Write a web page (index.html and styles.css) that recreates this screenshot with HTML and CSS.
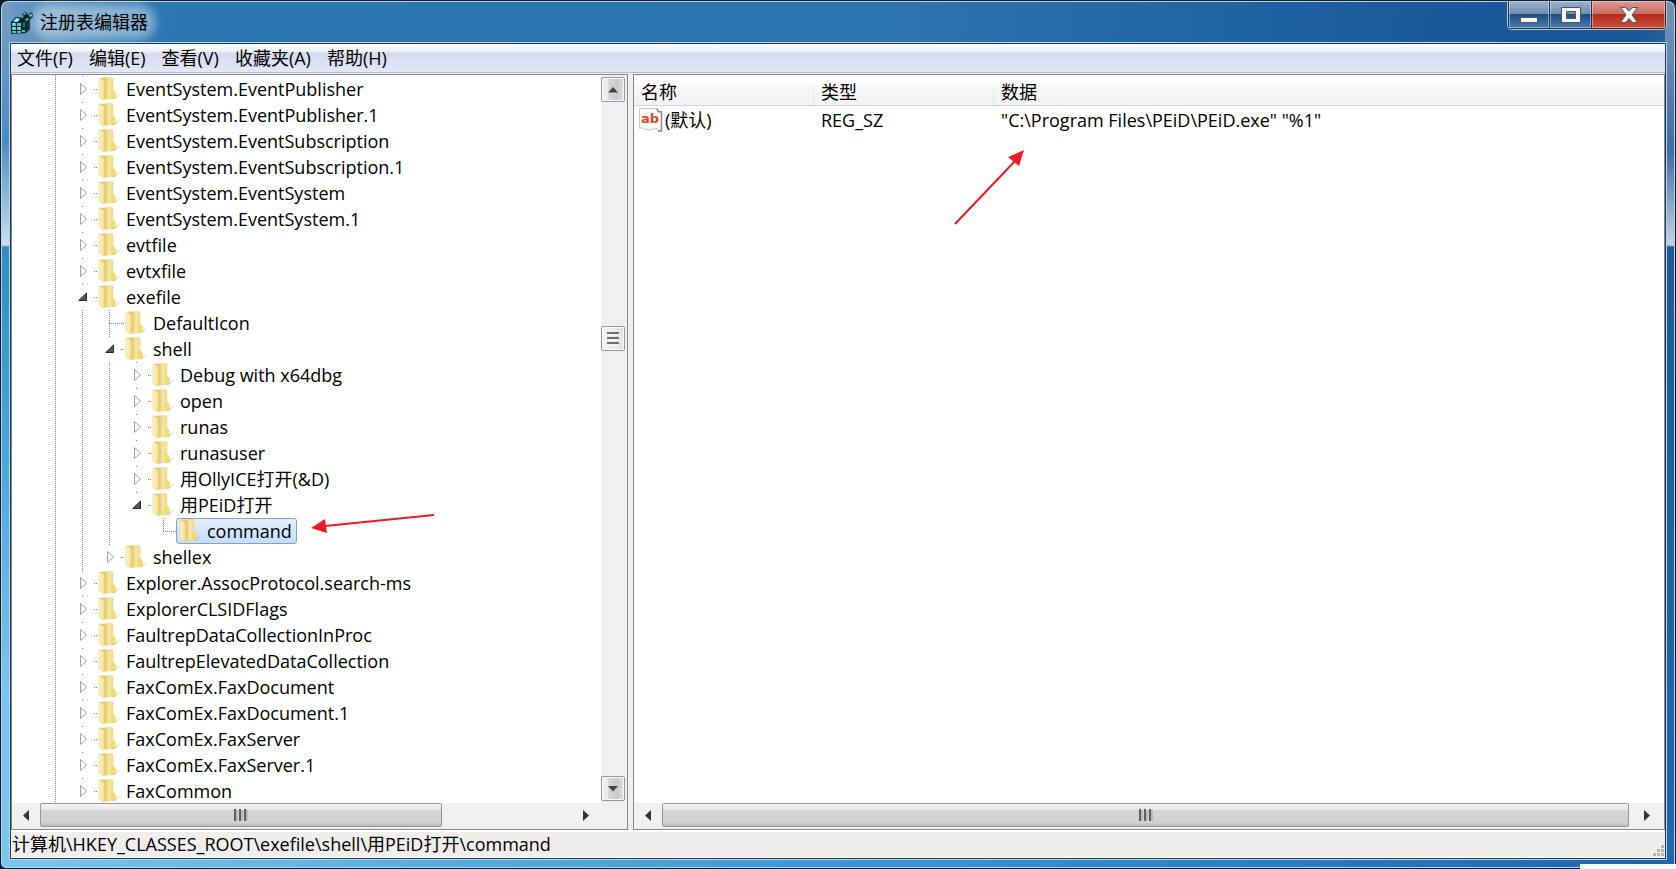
FILE: index.html
```
<!DOCTYPE html>
<html lang="zh-CN">
<head>
    <meta charset="UTF-8">
    <meta name="viewport" content="width=device-width, initial-scale=1.0">
    <title>注册表编辑器</title>
    <link rel="stylesheet" href="styles.css">
</head>
<body>
    <svg class="symbols" aria-hidden="true">
        <defs>
            <linearGradient id="cover" x1="0" y1="0" x2="1" y2="0">
                <stop offset="0" stop-color="#fdf5c4"/>
                <stop offset="1" stop-color="#f3e08e"/>
            </linearGradient>
            <linearGradient id="back" x1="0" y1="0" x2="1" y2="0">
                <stop offset="0" stop-color="#d9bd62"/>
                <stop offset="0.3" stop-color="#dfc46a"/>
                <stop offset="0.6" stop-color="#f5e7a4"/>
                <stop offset="1" stop-color="#f0d878"/>
            </linearGradient>
            <linearGradient id="shadow" x1="0" y1="0" x2="1" y2="0">
                <stop offset="0" stop-color="#888" stop-opacity="0.6"/>
                <stop offset="1" stop-color="#aaa" stop-opacity="0.1"/>
            </linearGradient>
            <symbol id="folder" viewBox="0 0 22 24">
                <path d="M14 22L22 15.500V18L17 22Z" fill="url(#shadow)"/>
                <path d="M2 1L13.500 0.500Q15 0.500 15 2V14L17 15V20Q17 21.500 15 21.500L6 22.500Z" fill="url(#back)" stroke="#ecd78c" stroke-width="0.600"/>
                <path d="M13.500 15.500Q13.500 14 15 14T17 15.500V20L14 21.500Z" fill="#f8df66" stroke="#e3c85e" stroke-width="0.500"/>
                <path d="M1 1.500Q1 1 2 1.200L5.500 2.800Q6.300 3.200 6.300 4.500V22.500Q6.300 23.300 5.500 23L1.500 20.500Q1 20 1 19Z" fill="url(#cover)" stroke="#e6d28a" stroke-width="0.600"/>
            </symbol>
            <symbol id="closed" viewBox="0 0 12 14">
                <path d="M2.500 1.500L8.500 7L2.500 12.500Z" fill="#fff" stroke="#a0a0a0"/>
            </symbol>
            <symbol id="opened" viewBox="0 0 12 14">
                <path d="M8.500 3V10.500H0.800Z" fill="#595959" stroke="#262626"/>
            </symbol>
        </defs>
    </svg>

    <div class="window">
        <header class="titlebar">
            <svg class="app-icon" viewBox="0 0 24 24" aria-hidden="true">
                <path d="M1 11L6 6L13 7L14 5L12 3L15 1L17 2L18 4L21 1L23 3L23 6L20 9L20 18L16 22L1 23Z" fill="#07262b"/>
                <path d="M2 12h4v3H2zM7 12h4v3H7zM2 16h4v3H2zM7 16h4v3H7zM2 20h4v2H2zM7 20h4v2H7zM12 19h3v2h-3z" fill="#3fc9c4"/>
                <path d="M3 10.500L6.500 7L10 8L7.500 11Z" fill="#a6f4ee"/>
                <path d="M13 2.500L15 1.500L16 3L15 4ZM19 4L21 2.500L22.500 4.500L20.500 6ZM15 9L17 7L19 8L16 10Z" fill="#48c9c8"/>
                <path d="M13 12L15 11V16H13Z" fill="#14777c"/>
                <path d="M3 12.500h2v1H3zM3 16.500h2v1H3zM8 16.500h2v1H8z" fill="#c8fffa"/>
            </svg>
            <h1 class="title">注册表编辑器</h1>
            <div class="caption-buttons">
                <button class="caption" type="button" aria-label="最小化">
                    <svg width="20" height="18" viewBox="0 0 20 18"><path d="M1.500 11.500h17v5h-17z" fill="#f4f4f4" stroke="#4f5567"/></svg>
                </button>
                <button class="caption" type="button" aria-label="最大化">
                    <svg width="20" height="18" viewBox="0 0 20 18"><path d="M0.500 1.500h19v15h-19zM5.500 5.500v7h9v-7z" fill="#f4f4f4" stroke="#4f5567" fill-rule="evenodd"/></svg>
                </button>
                <button class="caption close" type="button" aria-label="关闭">
                    <svg width="20" height="18" viewBox="0 0 20 18"><path d="M1.500 1.500H6.500L10 5L13.500 1.500H18.500L13 9L18.500 16.500H13.500L10 12.500L6.500 16.500H1.500L7 9Z" fill="#f4f4f4" stroke="#4f5567"/></svg>
                </button>
            </div>
        </header>

        <div class="client">
            <nav class="menubar">
                <button type="button">文件(F)</button>
                <button type="button">编辑(E)</button>
                <button type="button">查看(V)</button>
                <button type="button">收藏夹(A)</button>
                <button type="button">帮助(H)</button>
            </nav>

            <main class="panes">
                <section class="pane tree-pane">
                    <div class="tree-area">
                        <div class="tree">
                            <ul>
                                <li><div class="row"><button class="expander" type="button" aria-label="展开"><svg><use href="#closed"/></svg></button><a class="key" href="#"><svg><use href="#folder"/></svg>EventSystem.EventPublisher</a></div></li>
                                <li><div class="row"><button class="expander" type="button" aria-label="展开"><svg><use href="#closed"/></svg></button><a class="key" href="#"><svg><use href="#folder"/></svg>EventSystem.EventPublisher.1</a></div></li>
                                <li><div class="row"><button class="expander" type="button" aria-label="展开"><svg><use href="#closed"/></svg></button><a class="key" href="#"><svg><use href="#folder"/></svg>EventSystem.EventSubscription</a></div></li>
                                <li><div class="row"><button class="expander" type="button" aria-label="展开"><svg><use href="#closed"/></svg></button><a class="key" href="#"><svg><use href="#folder"/></svg>EventSystem.EventSubscription.1</a></div></li>
                                <li><div class="row"><button class="expander" type="button" aria-label="展开"><svg><use href="#closed"/></svg></button><a class="key" href="#"><svg><use href="#folder"/></svg>EventSystem.EventSystem</a></div></li>
                                <li><div class="row"><button class="expander" type="button" aria-label="展开"><svg><use href="#closed"/></svg></button><a class="key" href="#"><svg><use href="#folder"/></svg>EventSystem.EventSystem.1</a></div></li>
                                <li><div class="row"><button class="expander" type="button" aria-label="展开"><svg><use href="#closed"/></svg></button><a class="key" href="#"><svg><use href="#folder"/></svg>evtfile</a></div></li>
                                <li><div class="row"><button class="expander" type="button" aria-label="展开"><svg><use href="#closed"/></svg></button><a class="key" href="#"><svg><use href="#folder"/></svg>evtxfile</a></div></li>
                                <li>
                                    <div class="row"><button class="expander" type="button" aria-label="折叠"><svg><use href="#opened"/></svg></button><a class="key" href="#"><svg><use href="#folder"/></svg>exefile</a></div>
                                    <ul>
                                        <li><div class="row leaf"><a class="key" href="#"><svg><use href="#folder"/></svg>DefaultIcon</a></div></li>
                                        <li>
                                            <div class="row"><button class="expander" type="button" aria-label="折叠"><svg><use href="#opened"/></svg></button><a class="key" href="#"><svg><use href="#folder"/></svg>shell</a></div>
                                            <ul>
                                                <li><div class="row"><button class="expander" type="button" aria-label="展开"><svg><use href="#closed"/></svg></button><a class="key" href="#"><svg><use href="#folder"/></svg>Debug with x64dbg</a></div></li>
                                                <li><div class="row"><button class="expander" type="button" aria-label="展开"><svg><use href="#closed"/></svg></button><a class="key" href="#"><svg><use href="#folder"/></svg>open</a></div></li>
                                                <li><div class="row"><button class="expander" type="button" aria-label="展开"><svg><use href="#closed"/></svg></button><a class="key" href="#"><svg><use href="#folder"/></svg>runas</a></div></li>
                                                <li><div class="row"><button class="expander" type="button" aria-label="展开"><svg><use href="#closed"/></svg></button><a class="key" href="#"><svg><use href="#folder"/></svg>runasuser</a></div></li>
                                                <li><div class="row"><button class="expander" type="button" aria-label="展开"><svg><use href="#closed"/></svg></button><a class="key" href="#"><svg><use href="#folder"/></svg>用OllyICE打开(&amp;D)</a></div></li>
                                                <li class="last">
                                                    <div class="row"><button class="expander" type="button" aria-label="折叠"><svg><use href="#opened"/></svg></button><a class="key" href="#"><svg><use href="#folder"/></svg>用PEiD打开</a></div>
                                                    <ul>
                                                        <li class="last"><div class="row leaf"><a class="key selected" href="#"><svg><use href="#folder"/></svg>command</a></div></li>
                                                    </ul>
                                                </li>
                                            </ul>
                                        </li>
                                        <li class="last"><div class="row"><button class="expander" type="button" aria-label="展开"><svg><use href="#closed"/></svg></button><a class="key" href="#"><svg><use href="#folder"/></svg>shellex</a></div></li>
                                    </ul>
                                </li>
                                <li><div class="row"><button class="expander" type="button" aria-label="展开"><svg><use href="#closed"/></svg></button><a class="key" href="#"><svg><use href="#folder"/></svg>Explorer.AssocProtocol.search-ms</a></div></li>
                                <li><div class="row"><button class="expander" type="button" aria-label="展开"><svg><use href="#closed"/></svg></button><a class="key" href="#"><svg><use href="#folder"/></svg>ExplorerCLSIDFlags</a></div></li>
                                <li><div class="row"><button class="expander" type="button" aria-label="展开"><svg><use href="#closed"/></svg></button><a class="key" href="#"><svg><use href="#folder"/></svg>FaultrepDataCollectionInProc</a></div></li>
                                <li><div class="row"><button class="expander" type="button" aria-label="展开"><svg><use href="#closed"/></svg></button><a class="key" href="#"><svg><use href="#folder"/></svg>FaultrepElevatedDataCollection</a></div></li>
                                <li><div class="row"><button class="expander" type="button" aria-label="展开"><svg><use href="#closed"/></svg></button><a class="key" href="#"><svg><use href="#folder"/></svg>FaxComEx.FaxDocument</a></div></li>
                                <li><div class="row"><button class="expander" type="button" aria-label="展开"><svg><use href="#closed"/></svg></button><a class="key" href="#"><svg><use href="#folder"/></svg>FaxComEx.FaxDocument.1</a></div></li>
                                <li><div class="row"><button class="expander" type="button" aria-label="展开"><svg><use href="#closed"/></svg></button><a class="key" href="#"><svg><use href="#folder"/></svg>FaxComEx.FaxServer</a></div></li>
                                <li><div class="row"><button class="expander" type="button" aria-label="展开"><svg><use href="#closed"/></svg></button><a class="key" href="#"><svg><use href="#folder"/></svg>FaxComEx.FaxServer.1</a></div></li>
                                <li><div class="row"><button class="expander" type="button" aria-label="展开"><svg><use href="#closed"/></svg></button><a class="key" href="#"><svg><use href="#folder"/></svg>FaxCommon</a></div></li>
                            </ul>
                        </div>
                        <div class="vscroll">
                            <button class="vbutton" type="button" aria-label="向上滚动"><svg width="10" height="6" viewBox="0 0 10 6"><path d="M0 5.500L5 0L10 5.500Z" fill="#444"/></svg></button>
                            <div class="track-above"></div>
                            <div class="vbutton grip"><svg width="12" height="14" viewBox="0 0 12 14"><path d="M0 1h12M0 6h12M0 11h12" stroke="#707070" stroke-width="2"/><path d="M1 3h11M1 8h11M1 13h11" stroke="#fff"/></svg></div>
                            <div class="track-below"></div>
                            <button class="vbutton" type="button" aria-label="向下滚动"><svg width="10" height="6" viewBox="0 0 10 6"><path d="M0 0L5 5.500L10 0Z" fill="#444"/></svg></button>
                        </div>
                    </div>
                    <div class="hscroll">
                        <button class="hbutton" type="button" aria-label="向左滚动"><svg width="6" height="11" viewBox="0 0 6 11"><path d="M6 0L0 5.500L6 11Z" fill="#333"/></svg></button>
                        <div class="hthumb tree-thumb"><svg width="14" height="12" viewBox="0 0 14 12"><path d="M1 0v12M6 0v12M11 0v12" stroke="#606060" stroke-width="2"/><path d="M3 1v11M8 1v11M13 1v11" stroke="#b8b8b8" stroke-width="2"/></svg></div>
                        <div class="hspace"></div>
                        <button class="hbutton" type="button" aria-label="向右滚动"><svg width="6" height="11" viewBox="0 0 6 11"><path d="M0 0L6 5.500L0 11Z" fill="#333"/></svg></button>
                        <div class="corner"></div>
                    </div>
                    <svg class="pointer key-pointer" width="126" height="22" viewBox="0 0 126 22" aria-hidden="true">
                        <path d="M14 13L123 2" stroke="#ed1c24" stroke-width="2"/>
                        <path d="M0 15L14 6L16 20Z" fill="#ed1c24"/>
                    </svg>
                </section>

                <section class="pane value-pane">
                    <table class="values">
                        <colgroup>
                            <col class="col-name">
                            <col class="col-type">
                            <col>
                        </colgroup>
                        <thead>
                            <tr><th>名称</th><th>类型</th><th>数据</th></tr>
                        </thead>
                        <tbody>
                            <tr>
                                <td>
                                    <div class="value-name">
                                        <svg width="24" height="24" viewBox="0 0 24 24" aria-hidden="true">
                                            <path d="M0.500 0.500H18L19 3L22.500 4V22L19 22.500L18 20.500L14 21L12 22L5 21L3 19.500L0.500 20.500Z" fill="#fff" stroke="#c4c4c4"/>
                                            <path d="M18 0.500L19 3.500L22.500 4V23H19" fill="none" stroke="#8c8c8c" stroke-width="1.500"/>
                                            <text class="ab" x="2" y="15">ab</text>
                                        </svg>
                                        <span>(默认)</span>
                                    </div>
                                </td>
                                <td>REG_SZ</td>
                                <td>"C:\Program Files\PEiD\PEiD.exe" "%1"</td>
                            </tr>
                        </tbody>
                    </table>
                    <div class="hscroll">
                        <button class="hbutton" type="button" aria-label="向左滚动"><svg width="6" height="11" viewBox="0 0 6 11"><path d="M6 0L0 5.500L6 11Z" fill="#333"/></svg></button>
                        <div class="hthumb value-thumb"><svg width="14" height="12" viewBox="0 0 14 12"><path d="M1 0v12M6 0v12M11 0v12" stroke="#606060" stroke-width="2"/><path d="M3 1v11M8 1v11M13 1v11" stroke="#b8b8b8" stroke-width="2"/></svg></div>
                        <button class="hbutton wide" type="button" aria-label="向右滚动"><svg width="6" height="11" viewBox="0 0 6 11"><path d="M0 0L6 5.500L0 11Z" fill="#333"/></svg></button>
                    </div>
                    <svg class="pointer value-pointer" width="72" height="76" viewBox="0 0 72 76" aria-hidden="true">
                        <path d="M1 74L62 10" stroke="#ed1c24" stroke-width="2"/>
                        <path d="M70 0L54 7L65 16Z" fill="#ed1c24"/>
                    </svg>
                </section>
            </main>

            <footer class="statusbar">
                <span>计算机\HKEY_CLASSES_ROOT\exefile\shell\用PEiD打开\command</span>
                <svg class="size-grip" width="12" height="12" viewBox="0 0 12 12" aria-hidden="true"><path d="M8 0h3v3h-3zM4 4h3v3h-3zM8 4h3v3h-3zM0 8h3v3h-3zM4 8h3v3h-3zM8 8h3v3h-3z" fill="#b4b4b4"/></svg>
            </footer>
        </div>
    </div>
    <div class="desktop-corner"></div>
</body>
</html>
```
FILE: styles.css
```
* {
    box-sizing: border-box;
}

body {
    margin: 0;
    height: 100vh;
    overflow: hidden;
    background: #0a1a2c;
    color: #000;
    font-family: "Open Sans", "Noto Sans CJK SC", sans-serif;
    font-size: 18px;
}

button {
    margin: 0;
    padding: 0;
    border: 0;
    background: none;
    color: inherit;
    font: inherit;
}

svg {
    display: block;
    flex: none;
}

.symbols {
    position: absolute;
    width: 0;
    height: 0;
}

.window {
    display: flex;
    flex-direction: column;
    height: 100%;
    padding: 0 8px 8px;
    border: 1px solid #0b1d2e;
    border-radius: 8px 8px 6px 6px;
    box-shadow: inset 0 0 0 1px #b9d5e8;
    background:
        linear-gradient(#6f9bc5 0, #6f9bc5 30px, #4a8dc3 140px, #c8e0f0 244px, #318dc4 246px, #4aa5da 450px, #7ac6ee 700px, #7ac6ee) left / 10px 100% no-repeat,
        linear-gradient(#7391b7 0, #6288b3 60px, #3d6da8 150px, #c3d3e4 244px, #1b5b9b 246px, #1f68ae) right / 10px 100% no-repeat,
        linear-gradient(to right, #7ac6ee, #45a0d8 40%, #2a7fc2 75%, #1d64ab) bottom / 100% 12px no-repeat,
        linear-gradient(100deg, #6f9bc5 0, #2c78b1 140px, #2b74ae 50%, #195a9a 78%, #195795 90%, #6789b2 98%, #7391b7);
}

/* Title bar */
.titlebar {
    display: flex;
    align-items: flex-start;
    height: 41px;
    flex: none;
}

.app-icon {
    width: 24px;
    height: 24px;
    margin: 10px 0 0 1px;
}

.title {
    margin: 9px 0 0 4px;
    padding: 0 2px;
    border-radius: 12px;
    background: rgba(255, 255, 255, 0.4);
    box-shadow: 0 0 8px 6px rgba(255, 255, 255, 0.4);
    font-size: 18px;
    font-weight: normal;
    line-height: 24px;
}

.caption-buttons {
    display: flex;
    margin-left: auto;
    height: 29px;
    border: 1px solid #b3c7da;
    border-top: 0;
    border-radius: 0 0 5px 5px;
    overflow: hidden;
}

.caption {
    display: flex;
    align-items: center;
    justify-content: center;
    width: 42px;
    border: 1px solid #1b3554;
    border-top: 0;
    box-shadow: inset 0 0 0 1px rgba(255, 255, 255, 0.4);
    background: linear-gradient(#9db2cb, #6d8db3 48%, #1f4d82 50%, #4c7cae);
}

.caption + .caption {
    border-left: 0;
}

.caption.close {
    width: 74px;
    border-color: #561a14;
    background: linear-gradient(#dc9a92, #cc6a5e 48%, #b62d1c 50%, #c9513f);
}

/* Client area */
.client {
    display: flex;
    flex: 1;
    flex-direction: column;
    min-height: 0;
    border: 1px solid #1c3a52;
    outline: 1px solid #b9d5e8;
    background: #f0eded;
    margin: 1px;
}

.menubar {
    display: flex;
    flex: none;
    gap: 16px;
    height: 29px;
    padding: 0 6px;
    border-bottom: 1px solid #b6bccc;
    background: linear-gradient(#fff, #e9edf5 30%, #d4daee 31%, #e3e8f7);
    line-height: 28px;
}

.menubar button {
    white-space: nowrap;
}

.panes {
    display: flex;
    flex: 1;
    gap: 5px;
    min-height: 0;
    padding-top: 1px;
    background: #f0f0f0;
}

.pane {
    position: relative;
    display: flex;
    flex-direction: column;
    min-width: 0;
    border: 1px solid #828790;
    background: #fff;
}

.tree-pane {
    flex: 0 0 617px;
}

.value-pane {
    flex: 1;
}

/* Key tree */
.tree-area {
    display: flex;
    flex: 1;
    min-height: 0;
}

.tree {
    flex: 1;
    overflow: hidden;
    padding: 1px 0 0 66px;
    background: repeating-linear-gradient(#808080 0, #808080 1px, transparent 1px, transparent 2px) 43px 0 / 1px 100% no-repeat;
}

.tree ul {
    margin: 0;
    padding: 0;
    list-style: none;
}

.tree ul ul {
    padding-left: 27px;
}

.tree li {
    background: repeating-linear-gradient(#808080 0, #808080 1px, transparent 1px, transparent 2px) 4px 0 / 1px 100% no-repeat;
}

.tree li.last {
    background-size: 1px 13px;
}

.row {
    display: flex;
    align-items: center;
    height: 26px;
    background: repeating-linear-gradient(to right, #808080 0, #808080 1px, transparent 1px, transparent 2px) 4px 13px / 16px 1px no-repeat;
}

.row.leaf {
    padding-left: 15px;
}

.expander {
    width: 15px;
    height: 24px;
    background: #fff;
}

.expander svg {
    width: 12px;
    height: 14px;
}

.key {
    display: flex;
    align-items: center;
    gap: 6px;
    height: 26px;
    margin-left: 2px;
    padding: 0 4px 0 2px;
    border: 1px solid transparent;
    border-radius: 3px;
    color: #000;
    line-height: 24px;
    text-decoration: none;
    white-space: nowrap;
}

.key svg {
    width: 22px;
    height: 24px;
}

.key.selected {
    border-color: #7da2ce;
    background: linear-gradient(#e4effd, #c4ddfc);
}

/* Scroll bars */
.vscroll {
    display: flex;
    flex-direction: column;
    width: 26px;
    padding: 2px 2px 2px 0;
    background: #f0f0f0;
}

.vbutton {
    display: flex;
    flex: none;
    align-items: center;
    justify-content: center;
    width: 24px;
    height: 25px;
    border: 1px solid #979797;
    border-radius: 2px;
    box-shadow: inset 0 0 0 1px #fafafa;
    background: linear-gradient(to right, #f3f3f3, #e8e8ea 28%, #d6d6da 30%, #cacace 70%, #e0e0e2);
}

.vbutton.grip {
    background: linear-gradient(to right, #f5f5f5, #e2e2e4);
}

.track-above {
    flex: 225;
}

.track-below {
    flex: 426;
}

.hscroll {
    display: flex;
    flex: none;
    height: 26px;
    padding-bottom: 2px;
    background: #f0f0f0;
}

.hbutton {
    display: flex;
    align-items: center;
    justify-content: center;
    width: 28px;
}

.hbutton.wide {
    width: 35px;
}

.hthumb {
    display: flex;
    align-items: center;
    justify-content: center;
    border: 1px solid #979797;
    border-radius: 2px;
    background: linear-gradient(#f4f4f4, #e6e6e8 28%, #d3d3d6 30%, #d3d3d6 80%, #bebec2);
}

.tree-thumb {
    flex: 401;
}

.hspace {
    flex: 130;
}

.value-thumb {
    flex: 1;
}

.corner {
    width: 27px;
}

/* Values list */
.values {
    width: 100%;
    border-collapse: collapse;
    table-layout: fixed;
    margin-bottom: auto;
}

.col-name,
.col-type {
    width: 180px;
}

.values th,
.values td {
    height: 30px;
    padding: 0 7px;
    line-height: 26px;
    text-align: left;
    white-space: nowrap;
}

.values th {
    padding-top: 5px;
    border-bottom: 1px solid #d5d5d5;
    background: linear-gradient(to bottom, transparent, #e2e3e6) right / 1px 100% no-repeat, linear-gradient(#fff 34%, #f7f8fa 35%, #f1f2f4);
    font-weight: normal;
    line-height: 24px;
}

.values th:last-child {
    background: linear-gradient(#fff 34%, #f7f8fa 35%, #f1f2f4);
}

.values td:first-child {
    padding-left: 5px;
}

.value-name {
    display: flex;
    align-items: center;
    gap: 2px;
}

.ab {
    fill: #d9481f;
    font-family: "DejaVu Sans", sans-serif;
    font-size: 13px;
    font-weight: bold;
}

/* Red arrows */
.pointer {
    position: absolute;
}

.key-pointer {
    top: 438px;
    left: 299px;
}

.value-pointer {
    top: 75px;
    left: 320px;
}

/* Status bar */
.statusbar {
    display: flex;
    flex: none;
    align-items: flex-end;
    justify-content: space-between;
    height: 28px;
    padding-left: 1px;
    border-top: 2px solid #fff;
    border-bottom: 1px solid #fff;
    line-height: 25px;
    white-space: nowrap;
}

.desktop-corner {
    position: fixed;
    right: 0;
    bottom: 0;
    width: 96px;
    height: 5px;
    background: #f7faff;
}
```
